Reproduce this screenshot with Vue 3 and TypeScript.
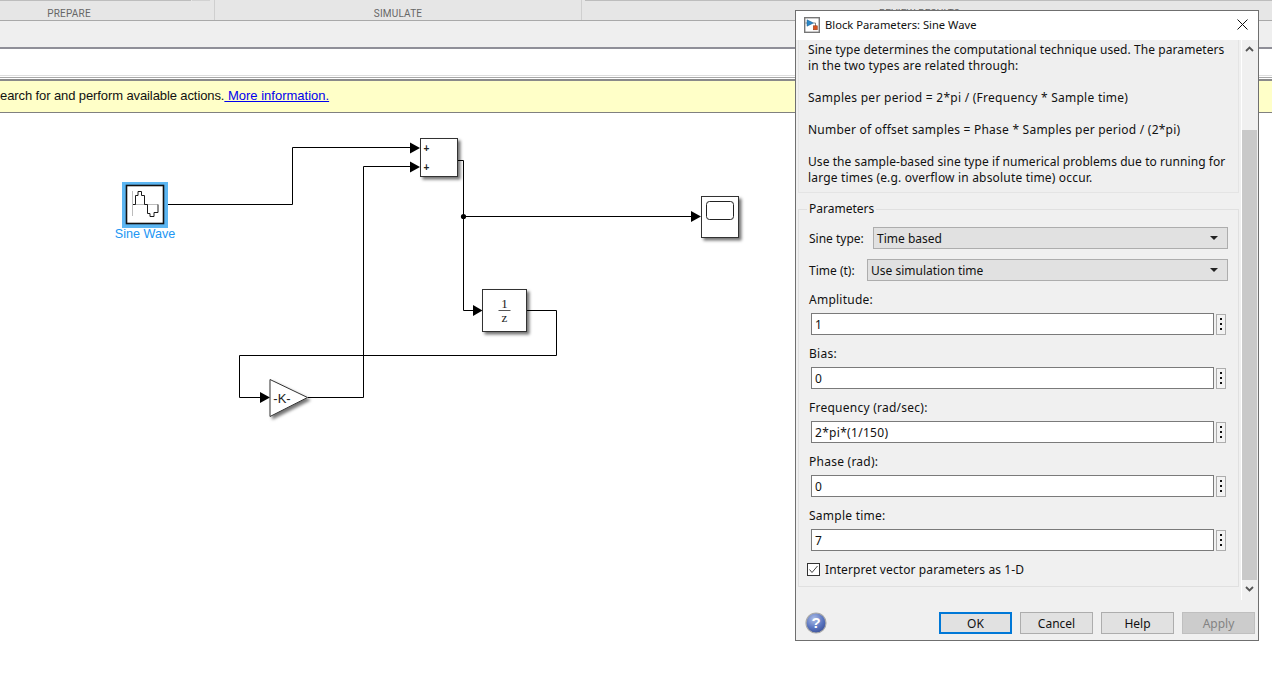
<template>
  <div class="page">
    <div class="toolstrip">
      <div class="section prepare"><span class="cap-edge"></span><span class="cap-box"></span>PREPARE</div>
      <div class="section simulate">SIMULATE</div>
      <div class="section review"><span class="cap-edge"></span>REVIEW RESULTS</div>
    </div>
    <div class="band"></div>
    <div class="address"></div>
    <div class="rule"></div>
    <div class="notice">
      <span class="notice-text">earch for and perform available actions.<a class="more"> More information.</a></span>
    </div>

    <svg class="canvas" viewBox="0 113 1272 561" width="1272" height="561">
      <defs>
        <filter id="shadow" x="-30%" y="-30%" width="170%" height="170%">
          <feDropShadow dx="2.5" dy="2.5" stdDeviation="1.6" flood-color="#000" flood-opacity="0.55" />
        </filter>
      </defs>

      <!-- wires -->
      <g fill="none" stroke="#000" stroke-width="1">
        <path d="M164.5 204.5H292.5V147.5H411" />
        <path d="M363.5 397.5V166.5H411" />
        <path d="M308 397.5H363.5" />
        <path d="M458 160.5H463.5V310.5H474" />
        <path d="M463.5 216.5H692" />
        <path d="M527 310.5H556.5V355.5H239.5V397.5H261" />
      </g>
      <circle cx="463.5" cy="216.5" r="2.6" fill="#000" />
      <g fill="#000">
        <path d="M410 142.5L420 148L410 153.5Z" />
        <path d="M410 161.5L420 167L410 172.5Z" />
        <path d="M473 305L482.5 310.5L473 316Z" />
        <path d="M691 211L701 216.5L691 222Z" />
        <path d="M260 392L270 397.5L260 403Z" />
      </g>

      <!-- sine wave -->
      <rect x="122" y="182" width="46" height="46" fill="#5cb6f2" />
      <rect x="126.5" y="185.5" width="37" height="38" fill="#fff" stroke="#111" stroke-width="1.6" />
      <path d="M132.5 191V216M132.5 204.5H158" stroke="#bcbcbc" fill="none" />
      <path d="M133 204.5H135.5V195.5H138V191.5H141.5V195.5H144.5V204.5H147.5V213.5H150V216.5H154V212.5H158V204.5" fill="none" stroke="#1a1a1a" />
      <text x="145" y="238" class="sine-label" text-anchor="middle">Sine Wave</text>

      <!-- sum -->
      <rect x="420.5" y="138.5" width="37" height="38" fill="#fff" stroke="#333" filter="url(#shadow)" />
      <text x="426.5" y="152" class="plus" text-anchor="middle">+</text>
      <text x="426.5" y="171" class="plus" text-anchor="middle">+</text>

      <!-- scope -->
      <rect x="701.5" y="196.5" width="37" height="41" fill="#fff" stroke="#333" filter="url(#shadow)" />
      <rect x="706.5" y="201.5" width="27" height="18" rx="3" fill="#fff" stroke="#222" />

      <!-- unit delay -->
      <rect x="482.5" y="289.5" width="44" height="42" fill="#fff" stroke="#333" filter="url(#shadow)" />
      <text x="504.5" y="308" class="delay" text-anchor="middle">1</text>
      <path d="M498.5 310.5H510.5" stroke="#555" />
      <text x="504.5" y="322" class="delay" text-anchor="middle">z</text>

      <!-- gain -->
      <path d="M270 379.5L307.5 397.5L270 416.5Z" fill="#fff" stroke="#333" filter="url(#shadow)" />
      <text x="282" y="402.5" class="gain" text-anchor="middle">-K-</text>
    </svg>

    <div class="dialog">
      <div class="titlebar">
        <svg class="app-icon" viewBox="0 0 16 16" width="16" height="16">
          <rect x="0.7" y="0.7" width="14.6" height="14.6" fill="#fff" stroke="#777" stroke-width="1.4" />
          <path d="M1.5 6H3M9.5 6H11.5V9" fill="none" stroke="#555" stroke-width="0.7" />
          <path d="M3 2.8L9.5 6L3 9.2Z" fill="#2a86c8" stroke="#1b5c8e" stroke-width="0.5" />
          <rect x="9.3" y="8.8" width="4" height="4" fill="#d9531e" stroke="#8a3210" stroke-width="0.5" />
        </svg>
        <span class="title">Block Parameters: Sine Wave</span>
        <svg class="close" viewBox="0 0 11 11" width="11" height="11">
          <path d="M0.5 0.5L10.5 10.5M10.5 0.5L0.5 10.5" stroke="#111" fill="none" />
        </svg>
      </div>

      <div class="body">
        <div class="scroll-area">
          <div class="description">
            <p
              v-for="(line, i) in description"
              :key="i"
              :style="{ letterSpacing: line.spacing + 'px' }"
            >{{ line.text || '\u00a0' }}</p>
          </div>

          <fieldset class="params">
            <legend>Parameters</legend>
            <div v-for="s in selects" :key="s.label" class="select-row">
              <label :style="{ width: s.labelWidth + 'px' }">{{ s.label }}</label>
              <div class="select">
                <span>{{ s.value }}</span>
                <i class="caret"></i>
              </div>
            </div>
            <div v-for="f in fields" :key="f.label" class="field">
              <label>{{ f.label }}</label>
              <div class="field-row">
                <div class="input">{{ f.value }}</div>
                <div class="dots"><i></i><i></i><i></i></div>
              </div>
            </div>
            <div class="check-row">
              <svg class="check" viewBox="0 0 13 13" width="13" height="13">
                <rect x="0.5" y="0.5" width="12" height="12" fill="#fff" stroke="#333" />
                <path d="M2.5 6.5L5 9.5L10.5 3" fill="none" stroke="#444" />
              </svg>
              <span>Interpret vector parameters as 1-D</span>
            </div>
          </fieldset>
        </div>

        <div class="scrollbar">
          <svg class="arrow" viewBox="0 0 9 6" width="9" height="6"><path d="M1 5L4.5 1.5L8 5" fill="none" stroke="#555" stroke-width="1.8" /></svg>
          <div class="thumb"></div>
          <svg class="arrow" viewBox="0 0 9 6" width="9" height="6"><path d="M1 1L4.5 4.5L8 1" fill="none" stroke="#555" stroke-width="1.8" /></svg>
        </div>
      </div>

      <div class="footer">
        <svg class="help" viewBox="0 0 22 22" width="22" height="22">
          <defs>
            <radialGradient id="ball" cx="40%" cy="30%" r="75%">
              <stop offset="0" stop-color="#aebfe8" />
              <stop offset="0.6" stop-color="#5a75c0" />
              <stop offset="1" stop-color="#3a4f96" />
            </radialGradient>
          </defs>
          <circle cx="11" cy="11" r="10" fill="url(#ball)" stroke="#a9a9a9" stroke-width="1.2" />
          <text x="11" y="16" class="help-mark" text-anchor="middle">?</text>
        </svg>
        <div class="buttons">
          <button class="btn primary">OK</button>
          <button class="btn">Cancel</button>
          <button class="btn">Help</button>
          <button class="btn disabled">Apply</button>
        </div>
      </div>
    </div>
  </div>
</template>

<script setup lang="ts">
const description = [
  { text: 'Sine type determines the computational technique used. The parameters', spacing: 0.07 },
  { text: 'in the two types are related through:', spacing: 0.11 },
  { text: '', spacing: 0 },
  { text: 'Samples per period = 2*pi / (Frequency * Sample time)', spacing: 0.26 },
  { text: '', spacing: 0 },
  { text: 'Number of offset samples = Phase * Samples per period / (2*pi)', spacing: 0.23 },
  { text: '', spacing: 0 },
  { text: 'Use the sample-based sine type if numerical problems due to running for', spacing: 0.07 },
  { text: 'large times (e.g. overflow in absolute time) occur.', spacing: 0.18 },
]

const selects = [
  { label: 'Sine type:', value: 'Time based', labelWidth: 64 },
  { label: 'Time (t):', value: 'Use simulation time', labelWidth: 58 },
]

const fields = [
  { label: 'Amplitude:', value: '1' },
  { label: 'Bias:', value: '0' },
  { label: 'Frequency (rad/sec):', value: '2*pi*(1/150)' },
  { label: 'Phase (rad):', value: '0' },
  { label: 'Sample time:', value: '7' },
]
</script>

<style>
html,
body {
  margin: 0;
  background: #fff;
}
</style>

<style scoped>
.page {
  position: relative;
  width: 1272px;
  height: 674px;
  overflow: hidden;
  background: #fff;
  font-family: "Liberation Sans", Arial, sans-serif;
}

.toolstrip {
  display: flex;
  height: 20px;
  background: #e6e6e6;
  border-bottom: 1px solid #a9a9a9;
  font-family: Roboto, sans-serif;
  font-size: 10px;
  letter-spacing: 0.2px;
  color: #666;
  line-height: 27px;
  text-align: center;
}

.section {
  position: relative;
  box-sizing: border-box;
  border-right: 1px solid #cfcfcf;
}

.prepare {
  width: 215px;
  padding-right: 76px;
}

.simulate {
  width: 367px;
}

.review {
  flex: 1;
  border-right: 0;
  text-align: left;
  padding-left: 297px;
}

.cap-edge {
  position: absolute;
  top: 0;
  left: 0;
  right: 23px;
  height: 1px;
  background: #bdbdbd;
}

.review .cap-edge {
  left: 3px;
  right: 0;
}

.cap-box {
  position: absolute;
  top: 0;
  left: 192px;
  width: 18px;
  height: 1px;
  background: #d2d2d2;
}

.band {
  height: 26px;
  background: #efefef;
  border-bottom: 2px solid #8f8f98;
}

.address {
  height: 26px;
  background: #fff;
  border-bottom: 1px solid #dedede;
}

.rule {
  height: 1px;
  margin-top: 1px;
  background: #a8a8a8;
}

.notice {
  box-sizing: border-box;
  height: 34px;
  margin-top: 1px;
  background: #ffffc8;
  border-top: 2px solid #8a8a8a;
  border-bottom: 1px solid #808080;
  font-size: 13px;
  line-height: 29px;
  color: #111;
  white-space: nowrap;
}

.notice-text {
  display: block;
  letter-spacing: -0.1px;
}

.more {
  color: #0000ee;
  text-decoration: underline;
  letter-spacing: 0;
}

.canvas {
  display: block;
}

.sine-label {
  font-size: 12.6px;
  fill: #2196f3;
}

.plus {
  font-size: 10px;
  font-weight: 700;
  fill: #222;
}

.delay {
  font-family: "Liberation Serif", serif;
  font-size: 13px;
  fill: #222;
}

.gain {
  font-size: 13px;
  fill: #222;
}

.dialog {
  position: absolute;
  left: 795px;
  top: 10px;
  box-sizing: border-box;
  width: 464px;
  height: 631px;
  display: flex;
  flex-direction: column;
  background: #f0f0f0;
  border: 1px solid #6f6f6f;
  font-family: "Noto Sans", Tahoma, sans-serif;
  font-size: 12px;
  color: #111;
}

.titlebar {
  flex: none;
  box-sizing: content-box;
  display: flex;
  align-items: center;
  height: 27px;
  padding: 0 10px 2px 8px;
  background: #fff;
}

.app-icon {
  flex: none;
}

.title {
  margin-left: 5px;
  flex: 1;
  font-size: 11.2px;
}

.body {
  flex: none;
  display: flex;
  height: 560px;
  padding-left: 2px;
}

.scroll-area {
  flex: none;
  width: 441px;
  overflow: hidden;
}

.description {
  box-sizing: border-box;
  height: 153px;
  padding: 2px 0 0 9px;
  border: 1px solid #e4e4e4;
  border-top: 0;
  background: #efefef;
}

.description p {
  margin: 0;
  height: 16px;
  line-height: 16px;
  white-space: nowrap;
}

.params {
  box-sizing: border-box;
  height: 386px;
  margin: 8px 0 0;
  padding: 10px 10px 0 10px;
  border: 1px solid #e0e0e0;
  min-width: 0;
}

.params legend {
  margin-left: -2px;
  padding: 0 2px;
  line-height: 16px;
}

.select-row {
  display: flex;
  align-items: center;
  height: 22px;
  margin-bottom: 10px;
}

.select-row label {
  flex: none;
  white-space: nowrap;
}

.select {
  flex: 1;
  display: flex;
  align-items: center;
  justify-content: space-between;
  box-sizing: border-box;
  height: 22px;
  padding: 0 9px 0 3px;
  background: #e1e1e1;
  border: 1px solid #adadad;
}

.caret {
  width: 0;
  height: 0;
  border-left: 4px solid transparent;
  border-right: 4px solid transparent;
  border-top: 4px solid #222;
}

.field {
  height: 54px;
}

.field label {
  display: block;
  height: 22px;
  line-height: 18px;
  letter-spacing: 0.25px;
}

.field-row {
  display: flex;
  align-items: center;
  gap: 2px;
}

.input {
  flex: none;
  box-sizing: border-box;
  width: 403px;
  height: 22px;
  line-height: 22px;
  margin-left: 2px;
  padding-left: 3px;
  background: #fff;
  border: 1px solid #7a7a7a;
  letter-spacing: 0.3px;
}

.dots {
  flex: none;
  box-sizing: border-box;
  width: 10px;
  height: 21px;
  display: flex;
  flex-direction: column;
  align-items: center;
  justify-content: center;
  gap: 3px;
  background: #f3f3f3;
  border: 1px solid #adadad;
}

.dots i {
  display: block;
  width: 2px;
  height: 2px;
  background: #111;
}

.check-row {
  display: flex;
  align-items: center;
  gap: 5px;
  margin: 0 0 0 -2px;
  height: 16px;
  letter-spacing: 0.1px;
}

.check {
  flex: none;
}

.scrollbar {
  flex: none;
  width: 15px;
  margin-left: 2px;
  display: flex;
  flex-direction: column;
  align-items: center;
  background: #f0f0f0;
  border-left: 1px solid #fff;
}

.arrow {
  flex: none;
  margin: 6px 0 8px;
}

.thumb {
  width: 15px;
  height: 453px;
  margin-top: 70px;
  background: #c9c9c9;
}

.thumb + .arrow {
  margin-top: 6px;
}

.footer {
  flex: 1;
  display: flex;
  align-items: center;
  justify-content: space-between;
  padding: 6px 3px 0 9px;
}

.help {
  flex: none;
}

.help-mark {
  font-family: "Liberation Sans", sans-serif;
  font-size: 15px;
  font-weight: 700;
  fill: #fff;
}

.buttons {
  display: flex;
  gap: 8px;
}

.btn {
  box-sizing: border-box;
  width: 73px;
  height: 22px;
  padding: 0;
  background: #e1e1e1;
  border: 1px solid #adadad;
  font: inherit;
  color: #111;
}

.btn.primary {
  border: 2px solid #0078d7;
}

.btn.disabled {
  background: #ccc;
  border-color: #bfbfbf;
  color: #838383;
}
</style>
